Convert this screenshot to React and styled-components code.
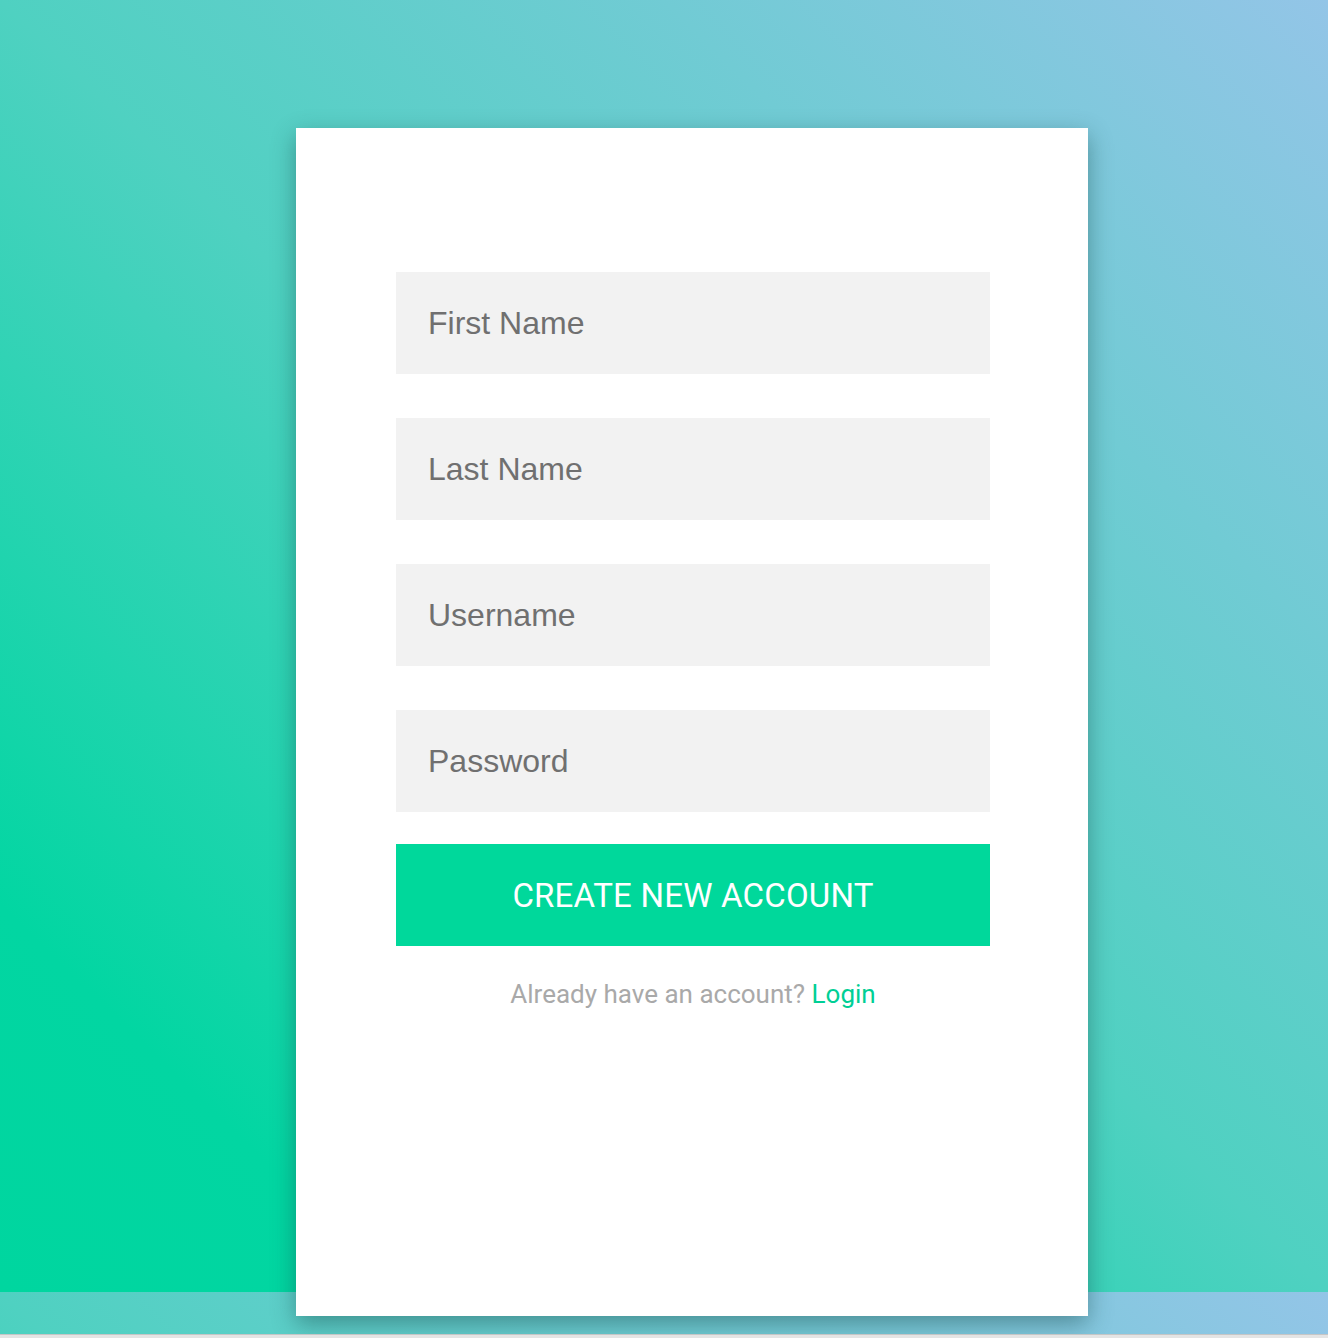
import React from "react";
import styled, { createGlobalStyle } from "styled-components";

const GlobalStyle = createGlobalStyle`
  html, body {
    margin: 0;
    padding: 0;
    background: #e4e4e4;
  }
  * {
    box-sizing: border-box;
  }
`;

const Page = styled.div`
  height: 1335px;
  background-image: linear-gradient(to top right, #00d69f 0%, #02d6a2 15%, #4fd1c1 50%, #93c5e7 100%);
  background-size: 100% 1292px;
  background-repeat: repeat-y;
  border-bottom: 1px solid #c6c6c6;
  overflow: hidden;
  display: flex;
  justify-content: flex-start;
  padding-top: 128px;
  padding-left: 296px;
`;

const Card = styled.div`
  width: 792px;
  height: 1188px;
  flex-shrink: 0;
  background: #ffffff;
  box-shadow: 0 8px 22px rgba(20, 70, 70, 0.45);
  padding: 144px 98px 0 100px;
  display: flex;
  flex-direction: column;
`;

const Form = styled.form`
  display: flex;
  flex-direction: column;
  gap: 44px;
`;

const Field = styled.input`
  width: 100%;
  height: 102px;
  border: none;
  outline: none;
  background: #f2f2f2;
  padding: 0 32px;
  font-family: "Liberation Sans", Arial, sans-serif;
  font-size: 32px;
  color: #6b6b6b;

  &::placeholder {
    color: #707070;
    opacity: 1;
  }
`;

const SubmitButton = styled.button`
  margin-top: 32px;
  width: 100%;
  height: 102px;
  border: none;
  background: #00d89b;
  color: #ffffff;
  font-family: Roboto, "Liberation Sans", sans-serif;
  font-size: 33px;
  letter-spacing: 0.2px;
  cursor: pointer;
`;

const Footer = styled.p`
  margin: 33px 0 0;
  text-align: center;
  font-family: Roboto, "Liberation Sans", sans-serif;
  font-size: 26px;
  color: #a9a9a9;
`;

const LoginLink = styled.a`
  color: #00cf95;
  text-decoration: none;
`;

export default function App() {
  return (
    <>
      <GlobalStyle />
      <Page>
        <Card>
          <Form onSubmit={(e) => e.preventDefault()}>
            <Field type="text" placeholder="First Name" />
            <Field type="text" placeholder="Last Name" />
            <Field type="text" placeholder="Username" />
            <Field type="password" placeholder="Password" />
          </Form>
          <SubmitButton type="button">CREATE NEW ACCOUNT</SubmitButton>
          <Footer>
            Already have an account? <LoginLink href="#">Login</LoginLink>
          </Footer>
        </Card>
      </Page>
    </>
  );
}
